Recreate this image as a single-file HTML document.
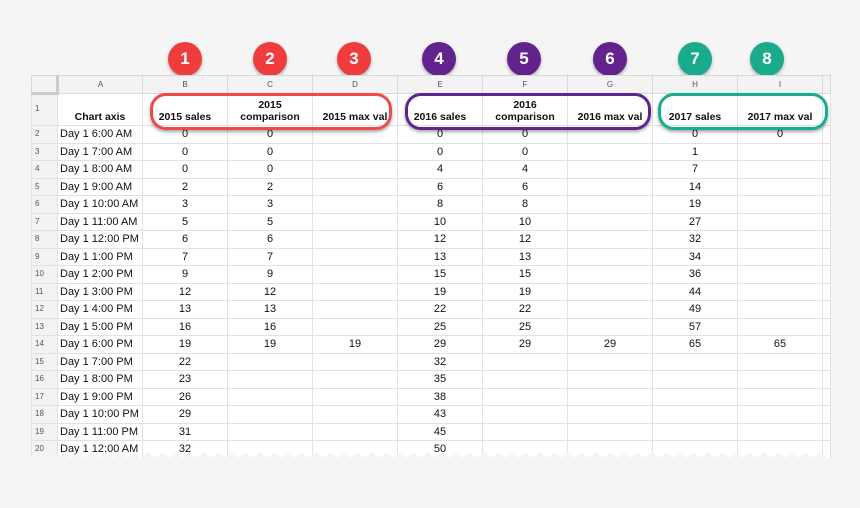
<!DOCTYPE html>
<html><head><meta charset="utf-8"><style>
body{margin:0;width:860px;height:502px;background:#f5f5f5;position:relative;overflow:hidden;font-family:"Liberation Sans",Arial,sans-serif;}
table{position:absolute;left:31px;top:75px;border-collapse:collapse;table-layout:fixed;background:#fff;}
td{border:1px solid #e2e2e2;padding:0;font-size:11px;color:#111;text-align:center;height:16.5px;line-height:16px;white-space:nowrap;overflow:hidden;}
tr.h td{background:#f3f3f3;color:#555;font-size:8px;height:16px;border-color:#d8d8d8;}
tr.h td:first-child{border-right:3px solid #ccc;border-bottom:3px solid #ccc;}
td.n{background:#f3f3f3;color:#555;font-size:8px;text-align:left;padding-left:3px;}
td.a{text-align:left;padding-left:2px;}
tr.r1 td{height:28px;font-weight:bold;font-size:10.5px;vertical-align:bottom;line-height:12px;padding-bottom:2px;}
tr.r1 td.n{font-weight:normal;font-size:8px;vertical-align:top;line-height:28px;padding-bottom:0;height:30px;}
.c{position:absolute;top:42px;width:34px;height:34px;border-radius:50%;color:#fff;font-size:17px;font-weight:bold;text-align:center;line-height:34px;box-shadow:0 2px 3px rgba(0,0,0,.3);}
.red{background:#f03c3c}.pur{background:#62248c}.tea{background:#1aaa8c}
.box{position:absolute;top:93px;height:31px;border-radius:16px;border:3px solid;box-shadow:0 2px 3px rgba(0,0,0,.35);}
</style></head><body>
<div class="c red" style="left:168px">1</div>
<div class="c red" style="left:253px">2</div>
<div class="c red" style="left:337px">3</div>
<div class="c pur" style="left:422px">4</div>
<div class="c pur" style="left:507px">5</div>
<div class="c pur" style="left:593px">6</div>
<div class="c tea" style="left:678px">7</div>
<div class="c tea" style="left:750px">8</div>
<table>
<colgroup><col style="width:26px"><col style="width:85px"><col style="width:85px"><col style="width:85px"><col style="width:85px"><col style="width:85px"><col style="width:85px"><col style="width:85px"><col style="width:85px"><col style="width:85px"><col style="width:8px"></colgroup>
<tr class="h"><td></td><td>A</td><td>B</td><td>C</td><td>D</td><td>E</td><td>F</td><td>G</td><td>H</td><td>I</td><td></td></tr>
<tr class="r1"><td class="n">1</td><td>Chart axis</td><td>2015 sales</td><td>2015<br>comparison</td><td>2015 max val</td><td>2016 sales</td><td>2016<br>comparison</td><td>2016 max val</td><td>2017 sales</td><td>2017 max val</td><td></td></tr>
<tr><td class="n">2</td><td class="a">Day 1 6:00 AM</td><td>0</td><td>0</td><td></td><td>0</td><td>0</td><td></td><td>0</td><td>0</td><td></td></tr>
<tr><td class="n">3</td><td class="a">Day 1 7:00 AM</td><td>0</td><td>0</td><td></td><td>0</td><td>0</td><td></td><td>1</td><td></td><td></td></tr>
<tr><td class="n">4</td><td class="a">Day 1 8:00 AM</td><td>0</td><td>0</td><td></td><td>4</td><td>4</td><td></td><td>7</td><td></td><td></td></tr>
<tr><td class="n">5</td><td class="a">Day 1 9:00 AM</td><td>2</td><td>2</td><td></td><td>6</td><td>6</td><td></td><td>14</td><td></td><td></td></tr>
<tr><td class="n">6</td><td class="a">Day 1 10:00 AM</td><td>3</td><td>3</td><td></td><td>8</td><td>8</td><td></td><td>19</td><td></td><td></td></tr>
<tr><td class="n">7</td><td class="a">Day 1 11:00 AM</td><td>5</td><td>5</td><td></td><td>10</td><td>10</td><td></td><td>27</td><td></td><td></td></tr>
<tr><td class="n">8</td><td class="a">Day 1 12:00 PM</td><td>6</td><td>6</td><td></td><td>12</td><td>12</td><td></td><td>32</td><td></td><td></td></tr>
<tr><td class="n">9</td><td class="a">Day 1 1:00 PM</td><td>7</td><td>7</td><td></td><td>13</td><td>13</td><td></td><td>34</td><td></td><td></td></tr>
<tr><td class="n">10</td><td class="a">Day 1 2:00 PM</td><td>9</td><td>9</td><td></td><td>15</td><td>15</td><td></td><td>36</td><td></td><td></td></tr>
<tr><td class="n">11</td><td class="a">Day 1 3:00 PM</td><td>12</td><td>12</td><td></td><td>19</td><td>19</td><td></td><td>44</td><td></td><td></td></tr>
<tr><td class="n">12</td><td class="a">Day 1 4:00 PM</td><td>13</td><td>13</td><td></td><td>22</td><td>22</td><td></td><td>49</td><td></td><td></td></tr>
<tr><td class="n">13</td><td class="a">Day 1 5:00 PM</td><td>16</td><td>16</td><td></td><td>25</td><td>25</td><td></td><td>57</td><td></td><td></td></tr>
<tr><td class="n">14</td><td class="a">Day 1 6:00 PM</td><td>19</td><td>19</td><td>19</td><td>29</td><td>29</td><td>29</td><td>65</td><td>65</td><td></td></tr>
<tr><td class="n">15</td><td class="a">Day 1 7:00 PM</td><td>22</td><td></td><td></td><td>32</td><td></td><td></td><td></td><td></td><td></td></tr>
<tr><td class="n">16</td><td class="a">Day 1 8:00 PM</td><td>23</td><td></td><td></td><td>35</td><td></td><td></td><td></td><td></td><td></td></tr>
<tr><td class="n">17</td><td class="a">Day 1 9:00 PM</td><td>26</td><td></td><td></td><td>38</td><td></td><td></td><td></td><td></td><td></td></tr>
<tr><td class="n">18</td><td class="a">Day 1 10:00 PM</td><td>29</td><td></td><td></td><td>43</td><td></td><td></td><td></td><td></td><td></td></tr>
<tr><td class="n">19</td><td class="a">Day 1 11:00 PM</td><td>31</td><td></td><td></td><td>45</td><td></td><td></td><td></td><td></td><td></td></tr>
<tr><td class="n">20</td><td class="a">Day 1 12:00 AM</td><td>32</td><td></td><td></td><td>50</td><td></td><td></td><td></td><td></td><td></td></tr>
</table>
<div class="box" style="left:150px;width:236px;border-color:#ef4a4a"></div>
<div class="box" style="left:405px;width:240px;border-color:#62248c"></div>
<div class="box" style="left:658px;width:164px;border-color:#16ad91"></div>
<svg style="position:absolute;left:0;top:448px" width="860" height="60">
<polygon fill="#f5f5f5" points="0,60 0,10 31,10 36,4 43,10 50,4 57,10 64,4 71,10 78,4 85,10 92,4 99,10 106,4 113,10 120,4 127,10 134,4 141,10 148,4 155,10 162,4 169,10 176,4 183,10 190,4 197,10 204,4 211,10 218,4 225,10 232,4 239,10 246,4 253,10 260,4 267,10 274,4 281,10 288,4 295,10 302,4 309,10 316,4 323,10 330,4 337,10 344,4 351,10 358,4 365,10 372,4 379,10 386,4 393,10 400,4 407,10 414,4 421,10 428,4 435,10 442,4 449,10 456,4 463,10 470,4 477,10 484,4 491,10 498,4 505,10 512,4 519,10 526,4 533,10 540,4 547,10 554,4 561,10 568,4 575,10 582,4 589,10 596,4 603,10 610,4 617,10 624,4 631,10 638,4 645,10 652,4 659,10 666,4 673,10 680,4 687,10 694,4 701,10 708,4 715,10 722,4 729,10 736,4 743,10 750,4 757,10 764,4 771,10 778,4 785,10 792,4 799,10 806,4 813,10 820,4 827,10 860,10 860,60"/>
</svg>
</body></html>
